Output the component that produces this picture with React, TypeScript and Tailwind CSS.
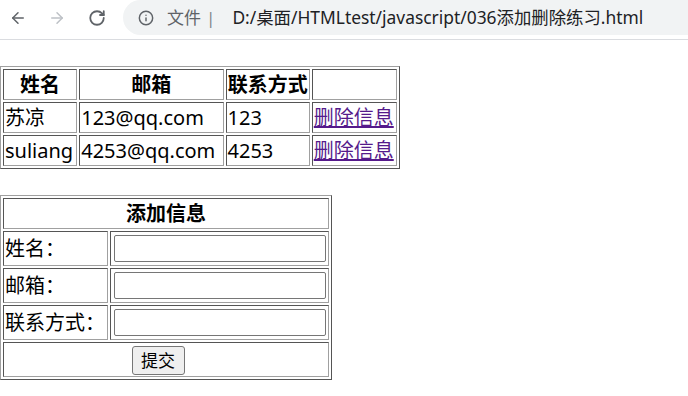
import { ArrowLeft, ArrowRight, RotateCw, Info } from "lucide-react";

const people = [
  { name: "苏凉", email: "123@qq.com", phone: "123" },
  { name: "suliang", email: "4253@qq.com", phone: "4253" },
];

const tableCls =
  "border-separate border-spacing-[2px] border border-t-[#a0a0a0] border-l-[#a0a0a0] border-r-[#555] border-b-[#555] table-fixed";
const cellCls =
  "border border-t-[#555] border-l-[#555] border-r-[#a0a0a0] border-b-[#a0a0a0] p-[1px]";

const formRows = ["姓名：", "邮箱：", "联系方式："];

export default function App() {
  return (
    <div className="w-[688px] h-[396px] bg-white text-black overflow-hidden font-['Noto_Sans','Noto_Sans_CJK_SC',sans-serif]">
      {/* browser bar */}
      <div className="h-[40px] border-b border-[#dadce0] flex items-start">
        <div className="flex items-center h-[35px] pl-[9px] gap-[21px]">
          <ArrowLeft className="w-[18px] h-[18px] text-[#5f6368]" strokeWidth={2} />
          <ArrowRight className="w-[18px] h-[18px] text-[#bdc1c6]" strokeWidth={2} />
          <RotateCw className="w-[18px] h-[18px] text-[#5f6368] ml-px" strokeWidth={2.4} />
        </div>
        <div className="ml-[17px] flex-1 h-[35px] bg-[#f1f3f4] rounded-l-full flex items-center pl-[15px] text-[17px]">
          <Info className="w-[16px] h-[16px] text-[#5f6368]" strokeWidth={2.2} />
          <span className="ml-[13px] text-[#5f6368]">文件</span>
          <span className="ml-[5px] text-[#80868b]">|</span>
          <span className="ml-[17px] text-[17.4px] text-[#202124]">D:/桌面/HTMLtest/javascript/036添加删除练习.html</span>
        </div>
      </div>

      {/* list table */}
      <table className={`${tableCls} mt-[26px] w-[400px] text-[20px] leading-[27px]`}>
        <colgroup>
          <col className="w-[74px]" />
          <col className="w-[144px]" />
          <col className="w-[84px]" />
          <col className="w-[85px]" />
        </colgroup>
        <thead>
          <tr>
            <th className={`${cellCls} h-[31px] font-bold`}>姓名</th>
            <th className={`${cellCls} h-[31px] font-bold`}>邮箱</th>
            <th className={`${cellCls} h-[31px] font-bold`}>联系方式</th>
            <th className={`${cellCls} h-[31px]`}></th>
          </tr>
        </thead>
        <tbody>
          {people.map((p) => (
            <tr key={p.name}>
              <td className={`${cellCls} h-[31px] whitespace-nowrap`}>{p.name}</td>
              <td className={`${cellCls} h-[31px] whitespace-nowrap`}>{p.email}</td>
              <td className={`${cellCls} h-[31px] whitespace-nowrap`}>{p.phone}</td>
              <td className={`${cellCls} h-[31px] whitespace-nowrap`}>
                <a href="#" className="text-[#551a8b] underline">删除信息</a>
              </td>
            </tr>
          ))}
        </tbody>
      </table>

      {/* add form */}
      <table className={`${tableCls} mt-[26px] w-[332px] text-[20px] leading-[27px]`}>
        <colgroup>
          <col className="w-[105px]" />
          <col className="w-[218px]" />
        </colgroup>
        <thead>
          <tr>
            <th colSpan={2} className={`${cellCls} h-[31px] font-bold`}>添加信息</th>
          </tr>
        </thead>
        <tbody>
          {formRows.map((label) => (
            <tr key={label}>
              <td className={`${cellCls} h-[35px] whitespace-nowrap`}>{label}</td>
              <td className={`${cellCls} h-[35px]`}>
                <input
                  type="text"
                  className="block mx-auto w-[212px] h-[27px] border border-[#767676] rounded-[2px] bg-white outline-none"
                />
              </td>
            </tr>
          ))}
          <tr>
            <td colSpan={2} className={`${cellCls} h-[35px] text-center`}>
              <button className="mr-4 w-[53px] h-[29px] align-middle bg-[#efefef] border border-[#767676] rounded-[3px] text-[17px] leading-[20px] font-['Noto_Sans_CJK_SC',sans-serif]">
                提交
              </button>
            </td>
          </tr>
        </tbody>
      </table>
    </div>
  );
}
